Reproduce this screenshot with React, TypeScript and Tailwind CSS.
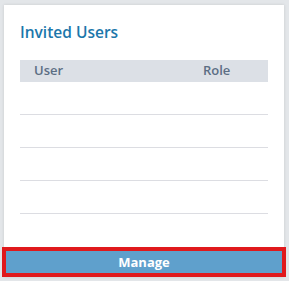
export default function App() {
  const rows = [0, 1, 2, 3];
  return (
    <div
      className="w-[289px] h-[281px] bg-[#e3e6e9] pt-[5px] pl-[4px] overflow-hidden"
      style={{ fontFamily: '"Open Sans", sans-serif' }}
    >
      <div className="w-[280px] h-[272px] bg-white flex flex-col shadow-[0_0_3px_rgba(0,0,0,0.12)]">
        <div className="px-4 pt-[17px]">
          <h2 className="text-[15.5px] leading-5 font-semibold text-[#1c77ab]">Invited Users</h2>

          <div className="mt-[18px]">
            <div className="flex items-center h-[22px] bg-[#dce0e6] text-[13px] font-semibold text-[#5b6e84]">
              <span className="flex-1 pl-[14px]">User</span>
              <span className="w-[65px]">Role</span>
            </div>
            {rows.map((r) => (
              <div key={r} className="h-[33px] border-b border-[#dcdde2]" />
            ))}
          </div>
        </div>

        <button className="mt-[33px] -mx-[2px] h-[31px] border-4 border-[#e0191c] bg-[#5fa0cc] text-white text-[13px] font-bold flex items-center justify-center pt-px">
          Manage
        </button>
      </div>
    </div>
  );
}
